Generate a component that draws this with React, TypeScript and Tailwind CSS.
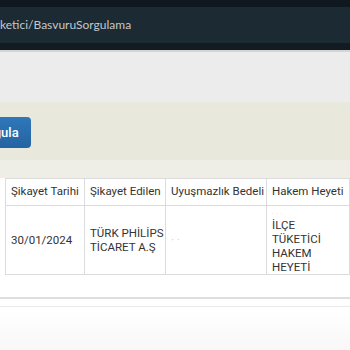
const rows = [
  {
    tarih: "30/01/2024",
    edilen: ["TÜRK PHİLİPS", "TİCARET A.Ş"],
    heyet: ["İLÇE", "TÜKETİCİ", "HAKEM", "HEYETİ"],
  },
];

export default function App() {
  return (
    <div className="h-[350px] w-[350px] overflow-hidden bg-[#f7f7f7] font-['Roboto',sans-serif]">
      {/* browser address bar */}
      <div className="h-[7px] bg-[#0f181e]" />
      <div className="flex h-[36px] items-center bg-[#1c2a34] font-['Lato',sans-serif] text-[12px] text-[#c3c8cc]">
        <span className="whitespace-nowrap">ketici/BasvuruSorgulama</span>
      </div>
      <div className="h-[7px] bg-[#111b21]" />
      <div className="h-[2px] bg-[#d4d4d4]" />

      <div className="h-[50px] bg-[#ececec]" />

      <div className="flex h-[58px] items-center bg-[#e8e8dc]">
        <button className="-ml-[36px] mt-[3px] h-[31px] rounded-[4px] bg-gradient-to-b from-[#2f78ba] to-[#2563a1] pl-[10px] pr-[12px] text-[13px] font-medium text-white">
          Sorgula
        </button>
      </div>
      <div className="h-[18px] bg-[#eeeee6]" />

      <div className="bg-white pl-[5px] pb-[22px]">
        <table className="w-[345px] table-fixed border-collapse text-[11.5px] text-[#333]">
          <colgroup>
            <col className="w-[79px]" />
            <col className="w-[81px]" />
            <col className="w-[101px]" />
            <col className="w-[83px]" />
          </colgroup>
          <thead>
            <tr className="h-[27px]">
              <th className="border border-[#dcdcdc] px-[5px] text-left font-normal whitespace-nowrap">Şikayet Tarihi</th>
              <th className="border border-[#dcdcdc] px-[5px] text-left font-normal whitespace-nowrap">Şikayet Edilen</th>
              <th className="border border-[#dcdcdc] px-[5px] text-left font-normal whitespace-nowrap">Uyuşmazlık Bedeli</th>
              <th className="border border-[#dcdcdc] px-[5px] text-left font-normal whitespace-nowrap">Hakem Heyeti</th>
            </tr>
          </thead>
          <tbody>
            {rows.map((r) => (
              <tr key={r.tarih} className="h-[68px] leading-[14px]">
                <td className="border border-[#dcdcdc] px-[5px]">{r.tarih}</td>
                <td className="border border-[#dcdcdc] px-[5px] whitespace-nowrap">
                  {r.edilen.map((l) => (
                    <div key={l}>{l}</div>
                  ))}
                </td>
                <td className="border border-[#dcdcdc] px-[5px] text-[#ccc]">· ·</td>
                <td className="border border-[#dcdcdc] px-[5px] pt-[4px]">
                  <div className="text-[8px] leading-[8px] text-[#ddd]">· · ·</div>
                  {r.heyet.map((l) => (
                    <div key={l}>{l}</div>
                  ))}
                </td>
              </tr>
            ))}
          </tbody>
        </table>
      </div>
      <div className="h-[2px] bg-[#dedede]" />
      <div className="h-[7px] bg-white" />
      <div className="h-[1px] bg-[#eaeaea]" />
      <div className="h-[60px] bg-gradient-to-b from-white to-[#f5f5f5]" />
    </div>
  );
}
